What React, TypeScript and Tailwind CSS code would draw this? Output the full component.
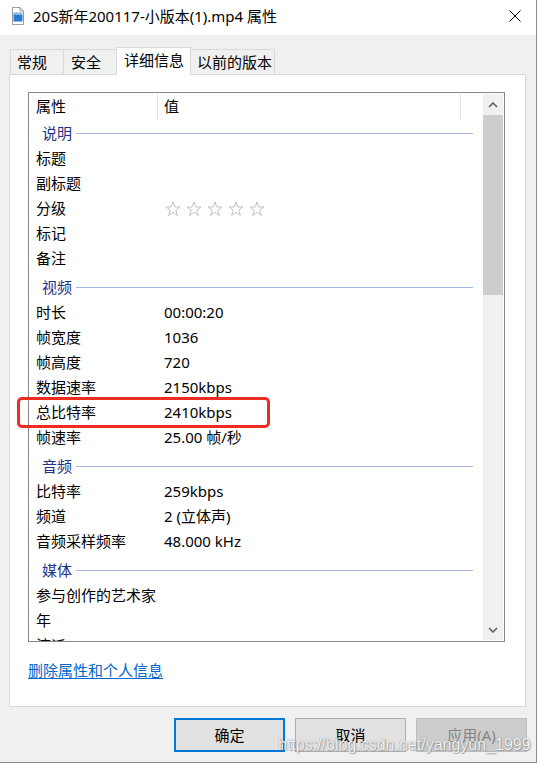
import React from "react"

type Row = { label: string; value?: string; stars?: boolean }
type Group = { title: string; rows: Row[] }

const groups: Group[] = [
  {
    title: "说明",
    rows: [
      { label: "标题" },
      { label: "副标题" },
      { label: "分级", stars: true },
      { label: "标记" },
      { label: "备注" },
    ],
  },
  {
    title: "视频",
    rows: [
      { label: "时长", value: "00:00:20" },
      { label: "帧宽度", value: "1036" },
      { label: "帧高度", value: "720" },
      { label: "数据速率", value: "2150kbps" },
      { label: "总比特率", value: "2410kbps" },
      { label: "帧速率", value: "25.00 帧/秒" },
    ],
  },
  {
    title: "音频",
    rows: [
      { label: "比特率", value: "259kbps" },
      { label: "频道", value: "2 (立体声)" },
      { label: "音频采样频率", value: "48.000 kHz" },
    ],
  },
  {
    title: "媒体",
    rows: [{ label: "参与创作的艺术家" }, { label: "年" }, { label: "流派" }],
  },
]

function Star() {
  return (
    <svg width="16" height="16" viewBox="0 0 16 16">
      <polygon
        points="8,1 9.8,6 15,6 10.8,9.2 12.4,14.5 8,11.3 3.6,14.5 5.2,9.2 1,6 6.2,6"
        fill="none"
        stroke="#c3c3c3"
        strokeWidth="1"
        strokeLinejoin="round"
      />
    </svg>
  )
}

function FileIcon() {
  return (
    <svg width="12" height="18" viewBox="0 0 12 18">
      <path d="M0.5 0.5H8L11.5 4V17.5H0.5Z" fill="#fff" stroke="#9b9b9b" />
      <path d="M8 0.5V4H11.5" fill="none" stroke="#9b9b9b" />
      <rect x="1.5" y="7.5" width="9" height="7" fill="#2a7ad2" />
      <rect x="1.5" y="5.5" width="9" height="2" fill="#5aa0ea" />
      <path d="M3 5.5L4.5 7.5M6 5.5L7.5 7.5M9 5.5L10.5 7.5" stroke="#fff" strokeWidth="0.8" />
    </svg>
  )
}

function Scrollbar() {
  return (
    <div className="my-px mr-px flex w-[20px] shrink-0 flex-col bg-[#f0f0f0]">
      <div className="flex h-[21px] items-center justify-center">
        <svg width="10" height="6" viewBox="0 0 10 6">
          <path d="M1 5L5 1L9 5" fill="none" stroke="#606060" strokeWidth="1.6" />
        </svg>
      </div>
      <div className="h-[180px] bg-[#cdcdcd]" />
      <div className="flex-1" />
      <div className="flex h-[21px] items-center justify-center">
        <svg width="10" height="6" viewBox="0 0 10 6">
          <path d="M1 1L5 5L9 1" fill="none" stroke="#606060" strokeWidth="1.6" />
        </svg>
      </div>
    </div>
  )
}

export default function App() {
  return (
    <div className="relative h-[763px] w-[538px] overflow-hidden bg-white font-['Noto_Sans','Noto_Sans_CJK_SC',sans-serif] text-[15px] text-black">
      <div className="flex h-[763px] w-[537px] flex-col border-r border-b border-[#8c8c8c] bg-[#f0f0f0]">
        {/* title bar */}
        <div className="flex h-[35px] shrink-0 items-center bg-white pb-[3px]">
          <div className="ml-[12px]">
            <FileIcon />
          </div>
          <span className="ml-[9px] leading-[20px]">20S新年200117-小版本(1).mp4 属性</span>
          <svg className="ml-auto mr-[15px]" width="12" height="12" viewBox="0 0 12 12">
            <path d="M0.5 0.5L11.5 11.5M11.5 0.5L0.5 11.5" stroke="#000" strokeWidth="1" />
          </svg>
        </div>

        {/* tabs */}
        <div className="flex h-[39px] shrink-0 items-end pl-[10px]">
          <div className="flex h-[25px] w-[54px] items-center border border-b-0 border-[#d9d9d9] pl-[6px]">常规</div>
          <div className="-ml-px flex h-[25px] w-[54px] items-center border border-b-0 border-[#d9d9d9] pl-[7px]">安全</div>
          <div className="relative z-10 -mb-px -ml-px flex h-[28px] w-[75px] items-center border border-b-0 border-[#d9d9d9] bg-white pb-[2px] pl-[7px]">
            详细信息
          </div>
          <div className="-ml-px flex h-[25px] w-[85px] items-center border border-b-0 border-[#d9d9d9] pl-[6px]">以前的版本</div>
        </div>

        {/* panel */}
        <div className="ml-[9px] flex h-[633px] w-[517px] shrink-0 flex-col border border-[#d9d9d9] bg-white pl-[18px] pt-[17px]">
          <div className="flex h-[550px] w-[477px] border border-[#828790]">
            <div className="flex-1 overflow-hidden">
              <div className="flex h-[27px]">
                <div className="flex w-[128px] items-center pl-[7px]">属性</div>
                <div className="mt-px w-px bg-[#e5e5e5]" />
                <div className="flex w-[302px] items-center pl-[6px]">值</div>
                <div className="mt-px w-px bg-[#e5e5e5]" />
              </div>
              {groups.map((g, gi) => (
                <div key={g.title}>
                  <div className={gi === 0 ? "flex h-[26px] items-center" : "mt-[3px] flex h-[26px] items-center"}>
                    <span className="pl-[13px] text-[#1e3287]">{g.title}</span>
                    <div className="ml-[4px] mr-[10px] h-px flex-1 bg-[#a5b9de]" />
                  </div>
                  {g.rows.map((r) => (
                    <div key={r.label} className="flex h-[25px] items-center">
                      <div className="w-[135px] shrink-0 pl-[7px]">{r.label}</div>
                      {r.stars ? (
                        <div className="ml-[1px] flex gap-[5px]">
                          <Star />
                          <Star />
                          <Star />
                          <Star />
                          <Star />
                        </div>
                      ) : (
                        <div>{r.value}</div>
                      )}
                    </div>
                  ))}
                </div>
              ))}
            </div>
            <Scrollbar />
          </div>
          <a href="#" className="mt-[18px] self-start leading-[20px] text-[#0066cc] underline underline-offset-2">
            删除属性和个人信息
          </a>
        </div>

        {/* buttons */}
        <div className="mt-[11px] flex gap-[10px] pl-[174px]">
          <button className="flex h-[34px] w-[111px] items-center justify-center border-2 border-[#0078d7] bg-[#e1e1e1]">确定</button>
          <button className="flex h-[34px] w-[111px] items-center justify-center border border-[#adadad] bg-[#e1e1e1]">取消</button>
          <button className="flex h-[34px] w-[111px] items-center justify-center border border-[#bfbfbf] bg-[#cccccc] text-[#838383]">应用(A)</button>
        </div>
      </div>

      {/* highlight */}
      <div className="absolute left-[17px] top-[397px] h-[31px] w-[253px] rounded-[5px] border-[3px] border-[#ef2b22]" />

      {/* watermark */}
      <div className="absolute left-[278px] top-[735px] font-['Liberation_Sans',sans-serif] text-[16px] leading-[20px] text-white/90 [text-shadow:0_0_1px_rgba(90,90,90,0.8),1px_1px_1px_rgba(120,120,120,0.5)]">
        https://blog.csdn.net/yangyun_1999
      </div>
    </div>
  )
}
